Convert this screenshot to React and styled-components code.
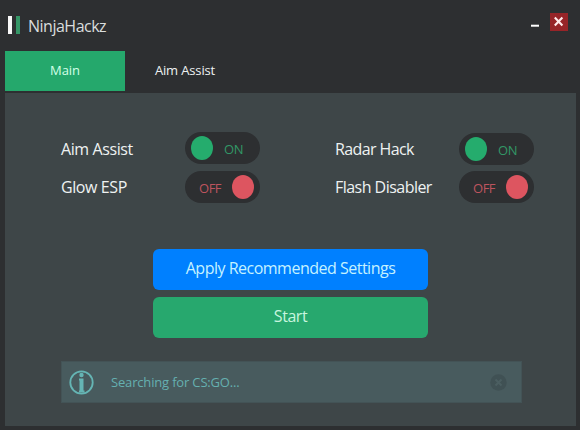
import React from "react";
import styled, { createGlobalStyle } from "styled-components";

const Global = createGlobalStyle`
  * { box-sizing: border-box; }
  body { margin: 0; background: #2d2f31; font-family: "Open Sans", "Noto Sans", sans-serif; }
`;

const Window = styled.div`
  width: 580px;
  height: 430px;
  padding: 0 4px 4px 5px;
  background: #2d2f31;
  display: flex;
  flex-direction: column;
  overflow: hidden;
`;

const TitleBar = styled.header`
  height: 51px;
  flex: none;
  display: flex;
  align-items: flex-start;
  padding: 13px 8px 0 3px;
`;

const Logo = styled.svg`
  margin-top: 3px;
  margin-right: 8px;
  flex: none;
`;

const Text = styled.span`
  font-size: ${(p) => p.$size || 16}px;
  letter-spacing: ${(p) => p.$spacing || 0}px;
  color: ${(p) => p.$color || "#eef2f2"};
  line-height: 24px;
  white-space: nowrap;
`;

const Title = styled(Text)`
  margin-top: 1px;
`;

const WindowButton = styled.button`
  width: 18px;
  height: 18px;
  border: 0;
  padding: 0;
  display: flex;
  background: ${(p) => (p.$danger ? "#972428" : "transparent")};
  margin-left: ${(p) => (p.$danger ? "6px" : "auto")};
`;

const Tabs = styled.nav`
  display: flex;
  height: 42px;
  flex: none;
`;

const Tab = styled.button`
  width: 120px;
  height: 40px;
  border: 0;
  padding: 0 0 2px;
  font-family: inherit;
  display: flex;
  align-items: center;
  justify-content: center;
  background: ${(p) => (p.$active ? "#25a86c" : "transparent")};
`;

const Panel = styled.main`
  flex: 1;
  background: #3e4648;
  padding: 39px 54px 23px 56px;
  display: flex;
  flex-direction: column;
`;

const Options = styled.section`
  display: flex;
  height: 117px;
`;

const Column = styled.div`
  width: 274px;
  flex: none;
`;

const Option = styled.div`
  display: flex;
  height: 39px;
  padding-top: ${(p) => p.$offset || 0}px;
`;

const OptionLabel = styled.div`
  width: 124px;
  flex: none;
  margin-top: ${(p) => p.$top}px;
`;

const Toggle = styled.div`
  width: 75px;
  height: 32px;
  border-radius: 16px;
  background: #2d2f31;
  display: flex;
  align-items: flex-start;
  flex-direction: ${(p) => (p.$on ? "row" : "row-reverse")};
  padding: 4px 6px;
`;

const Knob = styled.div`
  width: 22px;
  height: 24px;
  border-radius: 50%;
  flex: none;
  background: ${(p) => (p.$on ? "#25ac6d" : "#dd5560")};
`;

const ToggleText = styled(Text)`
  margin: ${(p) => (p.$on ? "1px 0 0 11px" : "1px 11px 0 0")};
`;

const Actions = styled.section`
  display: flex;
  flex-direction: column;
  gap: 7px;
  width: 275px;
  margin-left: 92px;
`;

const Action = styled.button`
  height: 41px;
  border: 0;
  border-radius: 6px;
  padding: 0 0 3px;
  font-family: inherit;
  background: ${(p) => p.$fill};
`;

const Alert = styled.div`
  height: 42px;
  margin-top: auto;
  display: flex;
  align-items: center;
  padding: 0 14px 0 7px;
  background: #485b5e;
  border: 1px solid #435356;
`;

const AlertText = styled(Text)`
  flex: 1;
  margin-left: 17px;
`;

function Switch({ on }) {
  return (
    <Toggle $on={on}>
      <Knob $on={on} />
      <ToggleText $on={on} $size={13} $spacing={on ? -0.45 : -0.55} $color={on ? "#329766" : "#bd545e"}>
        {on ? "ON" : "OFF"}
      </ToggleText>
    </Toggle>
  );
}

export default function App() {
  return (
    <>
      <Global />
      <Window>
        <TitleBar>
          <Logo width="12" height="18" shapeRendering="crispEdges">
            <rect width="4" height="18" fill="#f8f8f8" />
            <rect x="8" width="4" height="18" fill="#359667" />
          </Logo>
          <Title $size={16} $spacing={-0.5} $color="#d9dddd">NinjaHackz</Title>
          <WindowButton aria-label="Minimize">
            <svg width="18" height="18"><path d="M5 12.7h8" stroke="#fff" strokeWidth="2" /></svg>
          </WindowButton>
          <WindowButton $danger aria-label="Close">
            <svg width="18" height="18"><path d="M4.8 4.5l7.6 8M12.4 4.5l-7.6 8" stroke="#ffe9e9" strokeWidth="2.1" /></svg>
          </WindowButton>
        </TitleBar>
        <Tabs>
          <Tab $active><Text $size={13} $spacing={-0.1} $color="#d3ffe7">Main</Text></Tab>
          <Tab><Text $size={13} $spacing={-0.15}>Aim Assist</Text></Tab>
        </Tabs>
        <Panel>
          <Options>
            <Column>
              <Option>
                <OptionLabel $top={5}><Text $spacing={-0.4}>Aim Assist</Text></OptionLabel>
                <Switch on />
              </Option>
              <Option>
                <OptionLabel $top={4}><Text $spacing={-0.4}>Glow ESP</Text></OptionLabel>
                <Switch />
              </Option>
            </Column>
            <Column>
              <Option $offset={1}>
                <OptionLabel $top={4}><Text $spacing={-0.6}>Radar Hack</Text></OptionLabel>
                <Switch on />
              </Option>
              <Option>
                <OptionLabel $top={4}><Text $spacing={-0.53}>Flash Disabler</Text></OptionLabel>
                <Switch />
              </Option>
            </Column>
          </Options>
          <Actions>
            <Action $fill="#0080ff"><Text $spacing={-0.5} $color="#c5f2ff">Apply Recommended Settings</Text></Action>
            <Action $fill="#27a86e"><Text $spacing={-0.45} $color="#c7f5df">Start</Text></Action>
          </Actions>
          <Alert>
            <svg width="25" height="25" viewBox="0 0 25 25">
              <circle cx="12.5" cy="12.5" r="11.2" fill="none" stroke="#65b5b4" strokeWidth="1.8" />
              <circle cx="12.5" cy="5" r="2.2" fill="#65b5b4" />
              <path d="M10 8.5h4.5v12h1v2h-5.5v-2h.5v-10h-.5z" fill="#65b5b4" />
            </svg>
            <AlertText $size={13} $spacing={-0.17} $color="#65b0b0">Searching for CS:GO...</AlertText>
            <svg width="17" height="17" viewBox="0 0 17 17">
              <circle cx="8.5" cy="8.5" r="8.2" fill="#405154" />
              <path d="M5.5 5.5l6 6M11.5 5.5l-6 6" stroke="#4b5e61" strokeWidth="2" />
            </svg>
          </Alert>
        </Panel>
      </Window>
    </>
  );
}
